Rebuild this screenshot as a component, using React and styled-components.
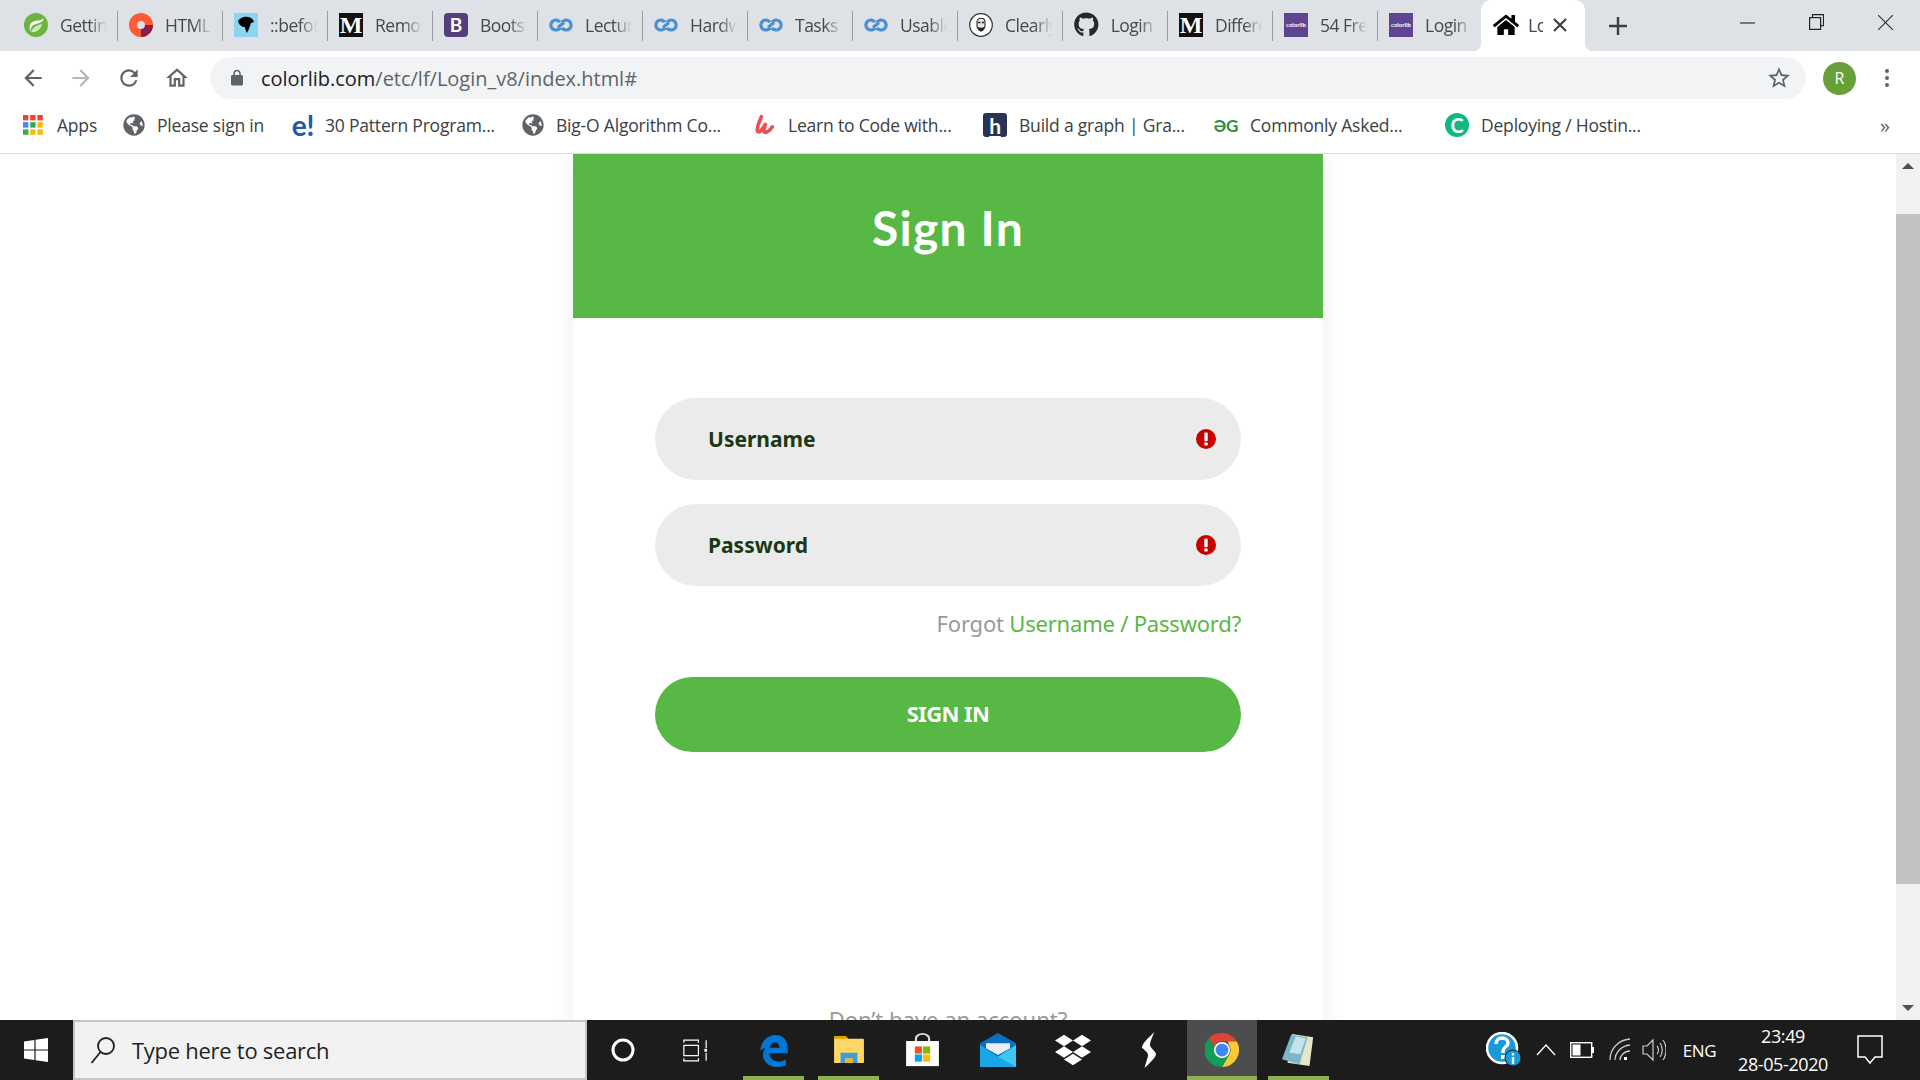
import React from 'react'
import styled, { createGlobalStyle } from 'styled-components'
import { FaHome, FaGithub, FaDropbox, FaGlobeAmericas } from 'react-icons/fa'

const GlobalStyle = createGlobalStyle`
  html, body { margin: 0; padding: 0; background: #fff; }
  * { box-sizing: border-box; }
  body { font-family: "Open Sans", "Liberation Sans", sans-serif; }
`

const Screen = styled.div`
  width: 1920px;
  height: 1080px;
  display: flex;
  flex-direction: column;
  overflow: hidden;
`

/* tab strip */
const TabStrip = styled.div`
  height: 51px;
  flex: none;
  display: flex;
  padding-left: 13px;
  background: #dee1e6;
`
const Tab = styled.div`
  width: 105px;
  height: 51px;
  flex: none;
  display: flex;
  align-items: center;
  padding: 0 11px 2px;
  gap: 12px;
  position: relative;
  &::after {
    content: '';
    position: absolute;
    right: 0;
    top: 11px;
    height: 30px;
    width: 1px;
    background: #9a9da1;
  }
`
const TabLabel = styled.span`
  width: 47px;
  overflow: hidden;
  white-space: nowrap;
  font-size: 17.5px;
  line-height: 24px;
  letter-spacing: -0.5px;
  color: #45484c;
  -webkit-mask-image: linear-gradient(to right, #000 62%, transparent 100%);
  mask-image: linear-gradient(to right, #000 62%, transparent 100%);
`
const ActiveTab = styled.div`
  width: 104px;
  margin-left: -2px;
  height: 51px;
  flex: none;
  display: flex;
  align-items: center;
  padding: 0 0 2px 12px;
  gap: 9px;
  background: #fff;
  border-radius: 10px 10px 0 0;
  position: relative;
  z-index: 1;
  &::before, &::after {
    content: '';
    position: absolute;
    bottom: 0;
    width: 8px;
    height: 8px;
    background: radial-gradient(circle at var(--c) 0, #dee1e6 8px, #fff 8.5px);
  }
  &::before { left: -8px; --c: 0; }
  &::after { right: -8px; --c: 8px; }
`
const ActiveLabel = styled(TabLabel)`
  width: 15px;
  -webkit-mask-image: none;
  mask-image: none;
  margin-right: 1px;
`
const NewTab = styled.div`
  width: 62px;
  display: flex;
  align-items: center;
  justify-content: center;
  margin-left: 2px;
`
const WindowButtons = styled.div`
  margin-left: auto;
  display: flex;
  height: 44px;
  align-items: center;
  padding-right: 27px;
  gap: 54px;
`

/* toolbar */
const Toolbar = styled.div`
  height: 51px;
  flex: none;
  display: flex;
  align-items: flex-start;
  background: #fff;
  padding-top: 6px;
`
const NavButtons = styled.div`
  width: 210px;
  height: 42px;
  flex: none;
  display: flex;
  align-items: center;
  padding-left: 20px;
  gap: 22px;
`
const AddressBar = styled.div`
  width: 1596px;
  height: 42px;
  flex: none;
  display: flex;
  align-items: center;
  background: #f1f3f4;
  border-radius: 21px;
  padding: 0 14px 0 18px;
`
const Url = styled.div`
  margin-left: 15px;
  flex: 1;
  font-size: 20px;
  letter-spacing: -0.02px;
  color: #5f6368;
  b { font-weight: 400; color: #202124; }
`
const ProfileArea = styled.div`
  flex: 1;
  height: 42px;
  display: flex;
  align-items: center;
  padding-left: 17px;
  gap: 29px;
`
const Avatar = styled.div`
  width: 33px;
  height: 33px;
  border-radius: 50%;
  background: #689f38;
  color: #fff;
  font-size: 16px;
  display: flex;
  align-items: center;
  justify-content: center;
`
const Kebab = styled.div`
  display: flex;
  flex-direction: column;
  gap: 3px;
  i {
    width: 4px;
    height: 4px;
    border-radius: 50%;
    background: #5f6368;
  }
`

/* bookmarks */
const BookmarkBar = styled.div`
  height: 52px;
  flex: none;
  display: flex;
  align-items: center;
  padding: 0 30px 5px 23px;
  background: #fff;
  border-bottom: 1px solid #dadce0;
`
const Bookmark = styled.div`
  width: ${p => p.$w}px;
  flex: none;
  display: flex;
  align-items: center;
  gap: ${p => p.$gap || 12}px;
  font-size: 17.5px;
  letter-spacing: -0.2px;
  color: #3c4043;
  white-space: nowrap;
`
const Chevrons = styled.div`
  margin-left: auto;
  font-size: 20px;
  color: #5f6368;
`

/* page */
const Viewport = styled.div`
  flex: 1;
  min-height: 0;
  display: flex;
  overflow: hidden;
  background: #fff;
`
const Main = styled.div`
  flex: 1;
  display: flex;
  justify-content: center;
  overflow: hidden;
  padding: 0 30px;
`
const Card = styled.div`
  width: 750px;
  height: 1000px;
  flex: none;
  background: #fff;
  box-shadow: 0 3px 24px rgba(0, 0, 0, 0.07);
`
const CardHeader = styled.div`
  height: 164px;
  background: #57b846;
  color: #fff;
  display: flex;
  justify-content: center;
  padding-top: 47px;
  font-family: Lato, sans-serif;
  font-weight: 700;
  font-size: 48px;
  letter-spacing: 1.2px;
  line-height: 54px;
`
const Form = styled.div`
  display: flex;
  flex-direction: column;
  padding: 80px 82px 0;
`
const Field = styled.div`
  height: 82px;
  margin-bottom: 24px;
  border-radius: 41px;
  background: #ebebeb;
  display: flex;
  align-items: center;
  justify-content: space-between;
  padding: 0 25px 0 53px;
  font-family: "Noto Sans", sans-serif;
  font-weight: 700;
  font-size: 21px;
  color: #1b3815;
`
const Forgot = styled.div`
  text-align: right;
  margin-top: -2px;
  height: 30px;
  line-height: 30px;
  font-family: "Noto Sans", sans-serif;
  font-size: 22px;
  letter-spacing: -0.2px;
  color: #999;
  a { color: #57b846; }
`
const SubmitButton = styled.div`
  height: 75px;
  margin-top: 39px;
  padding-bottom: 3px;
  border-radius: 38px;
  background: #57b846;
  color: #fff;
  display: flex;
  align-items: center;
  justify-content: center;
  font-family: "Noto Sans", sans-serif;
  font-weight: 700;
  font-size: 22px;
  letter-spacing: -0.6px;
`
const SignupHint = styled.div`
  margin-top: 252px;
  text-align: center;
  font-family: "Noto Sans", sans-serif;
  font-size: 22px;
  color: #999;
`

/* scrollbar */
const ScrollBar = styled.div`
  width: 24px;
  flex: none;
  display: flex;
  flex-direction: column;
  background: #f1f1f1;
`
const ScrollArrow = styled.div`
  height: 24px;
  flex: none;
  display: flex;
  align-items: center;
  justify-content: center;
  margin-top: ${p => (p.$down ? 'auto' : '0')};
  &::before {
    content: '';
    border-left: 6px solid transparent;
    border-right: 6px solid transparent;
    ${p => (p.$down ? 'border-top: 6px solid #505050;' : 'border-bottom: 6px solid #505050;')}
  }
`
const ScrollThumb = styled.div`
  height: 670px;
  margin-top: 36px;
  background: #c1c1c1;
`

/* taskbar */
const Taskbar = styled.div`
  height: 60px;
  flex: none;
  display: flex;
  background: #1c1c1c;
  color: #fff;
`
const StartSlot = styled.div`
  width: 73px;
  display: flex;
  align-items: center;
  justify-content: center;
  padding-right: 2px;
`
const SearchBox = styled.div`
  width: 514px;
  height: 60px;
  display: flex;
  align-items: center;
  padding-left: 15px;
  gap: 16px;
  background: #f2f2f2;
  border: 2px solid #c6c6c6;
  font-size: 22px;
  letter-spacing: -0.27px;
  color: #1f1f1f;
`
const TaskSlot = styled.div`
  width: ${p => p.$w}px;
  margin-left: ${p => p.$ml || 0}px;
  flex: none;
  display: flex;
  align-items: center;
  justify-content: center;
  background: ${p => (p.$active ? '#4d4d4d' : 'transparent')};
  border-bottom: 4px solid ${p => (p.$open ? '#8fb04f' : 'transparent')};
  padding-top: 4px;
`
const Tray = styled.div`
  margin-left: auto;
  display: flex;
  align-items: center;
  height: 60px;
  padding-right: 18px;
`
const TraySlot = styled.div`
  width: ${p => p.$w}px;
  flex: none;
  display: flex;
  align-items: center;
  justify-content: center;
  font-size: 17px;
  letter-spacing: -0.3px;
`
const Clock = styled.div`
  width: 110px;
  flex: none;
  display: flex;
  flex-direction: column;
  align-items: center;
  gap: 6px;
  font-size: 18px;
  line-height: 22px;
  letter-spacing: -0.4px;
`

/* favicons */
const FavBox = styled.div`
  width: 24px;
  height: 24px;
  flex: none;
  display: flex;
  align-items: center;
  justify-content: center;
  background: ${p => p.$bg};
  color: ${p => p.$fg || '#fff'};
  border-radius: ${p => p.$r || 0}px;
  font-family: ${p => p.$font || '"Liberation Serif", serif'};
  font-weight: 700;
  font-size: ${p => p.$size || 22}px;
  line-height: 1;
  overflow: hidden;
`

const SpringIcon = () => (
  <svg width="24" height="24" viewBox="0 0 24 24">
    <circle cx="12" cy="12" r="12" fill="#6db33f" />
    <path d="M20 5c-1 4-4 5-8 6-4 1-6 4-5 8-3-5-1-10 4-11 3-.6 7-.6 9-3z" fill="#fff" />
    <path d="M7 19c2-5 6-7 11-8-1 5-5 9-11 8z" fill="#cfe8b8" />
  </svg>
)
const RingIcon = () => (
  <svg width="24" height="24" viewBox="0 0 24 24">
    <circle cx="12" cy="12" r="8" fill="none" stroke="#ff5a36" strokeWidth="8" />
    <path d="M20 12A8 8 0 0 1 12 20" fill="none" stroke="#8d1c4a" strokeWidth="8" />
  </svg>
)
const DogIcon = () => (
  <svg width="24" height="24" viewBox="0 0 24 24">
    <rect width="24" height="24" fill="#8dd3f2" />
    <path d="M4 8c2-3 6-5 10-4 3 .6 5 2 6 5l-3 1-1 3c-1 3-2 5-3 7-1-2-2-4-2-6-3 0-6-2-7-6z" fill="#000" />
  </svg>
)
const LoopIcon = () => (
  <svg width="24" height="24" viewBox="0 0 24 24">
    <path
      d="M11 9.200A5 5 0 1 0 11 14.800M13 9.200A5 5 0 1 1 13 14.800M9 14.500 15 9.500"
      fill="none"
      stroke="#4a90d2"
      strokeWidth="3.200"
    />
  </svg>
)
const PortraitIcon = () => (
  <svg width="24" height="24" viewBox="0 0 24 24">
    <circle cx="12" cy="12" r="11.300" fill="#fff" stroke="#333" strokeWidth="1.200" />
    <path d="M8 9c0-5 8-5 8 0v4c0 4-8 4-8 0z" fill="#e6e6e6" stroke="#222" strokeWidth="1.100" />
    <path d="M9 9.500h2.400M12.800 9.500H15" stroke="#222" strokeWidth="1.500" />
    <path d="M8.500 14c2 1 5 1 7 0-.4 6-6.600 6-7 0z" fill="#222" />
  </svg>
)
const AppsGrid = () => (
  <svg width="20" height="20" viewBox="0 0 20 20">
    {['#ea4335', '#ea4335', '#ea4335', '#4285f4', '#34a853', '#fbbc05', '#34a853', '#fbbc05', '#fbbc05'].map((c, i) => (
      <rect key={i} x={(i % 3) * 7.2} y={Math.floor(i / 3) * 7.2} width="5.400" height="5.400" fill={c} />
    ))}
  </svg>
)
const UdemyIcon = () => (
  <svg width="22" height="24" viewBox="0 0 24 24" fill="none" stroke="#ec5252" strokeWidth="4" strokeLinecap="round">
    <path d="M8 3C6 9 2 15 4 19c2 2 6-3 9-9-2 5-3 10-1 10 3 0 6-3 8-6" />
  </svg>
)
const MediumFav = () => <FavBox $bg="#111" $size={24}>M</FavBox>
const ColorlibFav = () => <FavBox $bg="#5f4490" $size={6} $font="Lato, sans-serif">colorlib</FavBox>

const HomeGlobe = () => <FaGlobeAmericas size={22} color="#5f6368" />

/* taskbar icons */
const WindowsLogo = () => (
  <svg width="24" height="24" viewBox="0 0 24 24" fill="#fff">
    <path d="M0 3.600 10.400 2v9.400H0zM11.600 1.800 24 0v11.400H11.600zM0 12.600h10.400V22L0 20.400zM11.600 12.600H24V24l-12.400-1.800z" />
  </svg>
)
const MagnifierIcon = () => (
  <svg width="26" height="28" viewBox="0 0 26 28" fill="none" stroke="#1f1f1f" strokeWidth="1.800">
    <circle cx="16" cy="10" r="8" />
    <path d="M10.500 16 1.500 27" />
  </svg>
)
const TaskViewIcon = () => (
  <svg width="24" height="23" viewBox="0 0 28 26" fill="none" stroke="#fff" strokeWidth="1.400">
    <path d="M1 4V1h17v3M1 22v3h17v-3" />
    <rect x="1" y="7" width="17" height="12" />
    <path d="M27 1v9M27 16v9" />
    <rect x="25" y="11" width="3.500" height="3.500" fill="#fff" stroke="none" />
  </svg>
)
const EdgeIcon = () => (
  <svg width="30" height="33" viewBox="0 0 32 36">
    <path
      d="M1 18C2 7 10 1 18 1c8 0 13 6 13 15v5H11c0 6 5 9 10 9 3 0 6-1 8-2v6c-3 1-6 2-10 2-9 0-15-6-15-13 0-3 1-6 3-8-3 1-5 2-6 3zM11 15h11c0-3-2-6-5-6s-5 3-6 6z"
      fill="#0078d7"
    />
  </svg>
)
const FolderIcon = () => (
  <svg width="32" height="28" viewBox="0 0 34 30">
    <path d="M1 0h13l3 4H1z" fill="#e0a100" />
    <rect x="1" y="3" width="32" height="26" rx="1" fill="#ffd766" />
    <path d="M8 29V18h18v11h-5v-5h-8v5z" fill="#3f9bdc" />
    <rect x="13" y="24" width="8" height="5" fill="#f0b429" />
  </svg>
)
const StoreIcon = () => (
  <svg width="35" height="34" viewBox="0 0 32 38" preserveAspectRatio="none">
    <path d="M10 10V6a6 5 0 0 1 12 0v4" fill="none" stroke="#ddd" strokeWidth="2" />
    <rect x="1" y="9" width="30" height="28" fill="#fff" />
    <rect x="9" y="15" width="6.500" height="8" fill="#f25022" />
    <rect x="16.500" y="15" width="6.500" height="8" fill="#7fba00" />
    <rect x="9" y="24" width="6.500" height="8" fill="#00a4ef" />
    <rect x="16.500" y="24" width="6.500" height="8" fill="#ffb900" />
  </svg>
)
const MailIcon = () => (
  <svg width="36" height="34" viewBox="0 0 36 40" preserveAspectRatio="none">
    <path d="M0 12 18 0l18 12v28H0z" fill="#0a6fc2" />
    <path d="M6 12h24v6L18 26 6 18z" fill="#e8eef2" />
    <path d="M0 14l18 14 18-14v26H0z" fill="#1aa5e6" />
    <path d="M36 14v26L18 28z" fill="#3cc8f4" />
  </svg>
)
const SlashIcon = () => (
  <svg width="16" height="36" viewBox="0 0 18 46" preserveAspectRatio="none">
    <path d="M15 0C10 6 2 13 1 20c4 4 7 6 7 10-1 5-3 11-4 16 4-5 12-12 13-18-2-5-6-7-7-11 0-5 3-11 5-17z" fill="#fff" />
  </svg>
)
const ChromeIcon = () => (
  <svg width="34" height="34" viewBox="0 0 36 36">
    <path d="M18 0a18 18 0 0 1 15.600 9H18a9 9 0 0 0-8.400 5.600L4.200 5.600A18 18 0 0 1 18 0z" fill="#db4437" />
    <path d="M33.600 9A18 18 0 0 1 18 36l7.800-13.500A9 9 0 0 0 25.800 13.500L24 9z" fill="#fcc934" />
    <path d="M18 36A18 18 0 0 1 4.200 5.600l7.800 13.500a7 7 0 0 0 10 3.400L25.800 22.500z" fill="#0f9d58" />
    <circle cx="18" cy="18" r="8.500" fill="#fff" />
    <circle cx="18" cy="18" r="6.800" fill="#4285f4" />
  </svg>
)
const NotepadIcon = () => (
  <svg width="33" height="32" viewBox="0 0 36 38" preserveAspectRatio="none">
    <path d="M11 0 34 4 30 38 6 34z" fill="#e8e6c8" />
    <path d="M10 1 28 4 19 36 0 30z" fill="#79b7c9" />
    <path d="M15 3 26 5 20 24 8 22z" fill="#c6e3ea" />
  </svg>
)
const HelpIcon = () => (
  <svg width="36" height="36" viewBox="0 0 36 36">
    <circle cx="16" cy="16" r="15" fill="#1a9ad6" stroke="#fff" strokeWidth="2.500" />
    <path d="M10 12c0-4 3-6 6-6s6 2 6 5c0 4-5 4-5 8v2" fill="none" stroke="#fff" strokeWidth="3.500" />
    <rect x="15" y="23" width="4" height="4" fill="#fff" />
    <circle cx="27" cy="26" r="8" fill="#1a9ad6" stroke="#1c1c1c" />
    <rect x="25.800" y="25" width="2.400" height="7" fill="#fff" />
    <rect x="25.800" y="21" width="2.400" height="2.400" fill="#fff" />
  </svg>
)
const AlertIcon = () => (
  <svg width="20" height="20" viewBox="0 0 20 20">
    <circle cx="10" cy="10" r="10" fill="#c80000" />
    <rect x="8.300" y="3.600" width="3.400" height="8.600" rx="1" fill="#fff" />
    <rect x="8.300" y="13.400" width="3.400" height="3" rx="0.600" fill="#fff" />
  </svg>
)

const tabs = [
  { icon: <SpringIcon />, label: 'Getting' },
  { icon: <RingIcon />, label: 'HTML' },
  { icon: <DogIcon />, label: '::before' },
  { icon: <MediumFav />, label: 'Remove' },
  { icon: <FavBox $bg="#563d7c" $r={4} $font="Lato, sans-serif" $size={19}>B</FavBox>, label: 'Bootstrap' },
  { icon: <LoopIcon />, label: 'Lecture' },
  { icon: <LoopIcon />, label: 'Hardware' },
  { icon: <LoopIcon />, label: 'Tasks' },
  { icon: <LoopIcon />, label: 'Usable' },
  { icon: <PortraitIcon />, label: 'Clearly' },
  { icon: <FaGithub size={25} color="#24292e" />, label: 'Login' },
  { icon: <MediumFav />, label: 'Difference' },
  { icon: <ColorlibFav />, label: '54 Free' },
  { icon: <ColorlibFav />, label: 'Login' },
]

const bookmarks = [
  { w: 100, gap: 14, icon: <AppsGrid />, label: 'Apps' },
  { w: 168, icon: <HomeGlobe />, label: 'Please sign in' },
  { w: 231, gap: 10, icon: <FavBox $bg="transparent" $fg="#1a5aa8" $size={28} $font="Lato, sans-serif">e!</FavBox>, label: '30 Pattern Program...' },
  { w: 232, icon: <HomeGlobe />, label: 'Big-O Algorithm Co...' },
  { w: 229, gap: 12, icon: <UdemyIcon />, label: 'Learn to Code with...' },
  { w: 231, icon: <FavBox $bg="#2b3354" $r={3} $font="Lato, sans-serif" $size={21}><u>h</u></FavBox>, label: 'Build a graph | Gra...' },
  { w: 231, icon: <FavBox $bg="transparent" $fg="#2f8d46" $size={17} $font="Lato, sans-serif">ƏG</FavBox>, label: 'Commonly Asked...' },
  { w: 230, icon: <FavBox $bg="#10b981" $r={12} $font="Lato, sans-serif" $size={20}>C</FavBox>, label: 'Deploying / Hostin...' },
]

export default function App() {
  return (
    <Screen>
      <GlobalStyle />
      <TabStrip>
        {tabs.map((t, i) => (
          <Tab key={i}>
            {t.icon}
            <TabLabel>{t.label}</TabLabel>
          </Tab>
        ))}
        <ActiveTab>
          <FaHome size={26} color="#000" />
          <ActiveLabel>Lo</ActiveLabel>
          <svg width="14" height="14" viewBox="0 0 14 14" stroke="#3c4043" strokeWidth="2.200">
            <path d="M1 1 13 13M13 1 1 13" />
          </svg>
        </ActiveTab>
        <NewTab>
          <svg width="18" height="18" viewBox="0 0 18 18" stroke="#3c4043" strokeWidth="2.400">
            <path d="M9 0v18M0 9h18" />
          </svg>
        </NewTab>
        <WindowButtons>
          <svg width="15" height="15" viewBox="0 0 15 15" stroke="#333" strokeWidth="1.200">
            <path d="M0 8h15" />
          </svg>
          <svg width="15" height="16" viewBox="0 0 15 16" fill="none" stroke="#222" strokeWidth="1.200">
            <path d="M3.500 3V.6h11v11H12" />
            <rect x="0.600" y="3.600" width="11" height="11.800" />
          </svg>
          <svg width="15" height="15" viewBox="0 0 15 15" stroke="#333" strokeWidth="1.200">
            <path d="M0 0 15 15M15 0 0 15" />
          </svg>
        </WindowButtons>
      </TabStrip>

      <Toolbar>
        <NavButtons>
          <svg width="26" height="26" viewBox="0 0 24 24" fill="#5f6368">
            <path d="M20 11H7.830l5.590-5.590L12 4l-8 8 8 8 1.410-1.410L7.830 13H20v-2z" />
          </svg>
          <svg width="26" height="26" viewBox="0 0 24 24" fill="#b4b6b9">
            <path d="M12 4l-1.410 1.410L16.170 11H4v2h12.170l-5.580 5.590L12 20l8-8z" />
          </svg>
          <svg width="26" height="26" viewBox="0 0 24 24" fill="#5f6368">
            <path d="M17.650 6.350A7.958 7.958 0 0 0 12 4c-4.420 0-7.990 3.580-7.990 8s3.570 8 7.990 8c3.730 0 6.840-2.550 7.730-6h-2.080A5.990 5.990 0 0 1 12 18c-3.310 0-6-2.690-6-6s2.690-6 6-6c1.660 0 3.140.690 4.220 1.780L13 11h7V4l-2.350 2.350z" />
          </svg>
          <svg width="26" height="26" viewBox="0 0 24 24" fill="#5f6368">
            <path d="M12 5.690l5 4.500V18h-2v-6H9v6H7v-7.810l5-4.500M12 3L2 12h3v8h6v-6h2v6h6v-8h3L12 3z" />
          </svg>
        </NavButtons>
        <AddressBar>
          <svg width="18" height="18" viewBox="0 0 24 24" fill="#5f6368">
            <path d="M18 8h-1V6c0-2.760-2.240-5-5-5S7 3.240 7 6v2H6c-1.100 0-2 .9-2 2v10c0 1.100.9 2 2 2h12c1.100 0 2-.9 2-2V10c0-1.100-.9-2-2-2zM9 6c0-1.660 1.340-3 3-3s3 1.340 3 3v2H9V6z" />
          </svg>
          <Url><b>colorlib.com</b>/etc/lf/Login_v8/index.html#</Url>
          <svg width="26" height="26" viewBox="0 0 24 24" fill="#5f6368">
            <path d="M22 9.240l-7.190-.62L12 2 9.190 8.630 2 9.240l5.460 4.730L5.820 21 12 17.270 18.180 21l-1.630-7.030L22 9.240zM12 15.400l-3.760 2.270 1-4.280-3.320-2.880 4.380-.38L12 6.100l1.710 4.040 4.380.38-3.320 2.880 1 4.280L12 15.400z" />
          </svg>
        </AddressBar>
        <ProfileArea>
          <Avatar>R</Avatar>
          <Kebab><i /><i /><i /></Kebab>
        </ProfileArea>
      </Toolbar>

      <BookmarkBar>
        {bookmarks.map((b, i) => (
          <Bookmark key={i} $w={b.w} $gap={b.gap}>
            {b.icon}
            <span>{b.label}</span>
          </Bookmark>
        ))}
        <Chevrons>»</Chevrons>
      </BookmarkBar>

      <Viewport>
        <Main>
          <Card>
            <CardHeader>Sign In</CardHeader>
            <Form>
              <Field>Username<AlertIcon /></Field>
              <Field>Password<AlertIcon /></Field>
              <Forgot>Forgot <a>Username / Password?</a></Forgot>
              <SubmitButton>SIGN IN</SubmitButton>
              <SignupHint>Don’t have an account?</SignupHint>
            </Form>
          </Card>
        </Main>
        <ScrollBar>
          <ScrollArrow />
          <ScrollThumb />
          <ScrollArrow $down />
        </ScrollBar>
      </Viewport>

      <Taskbar>
        <StartSlot><WindowsLogo /></StartSlot>
        <SearchBox>
          <MagnifierIcon />
          Type here to search
        </SearchBox>
        <TaskSlot $w={72}>
          <svg width="24" height="24" viewBox="0 0 24 24" fill="none" stroke="#fff" strokeWidth="3">
            <circle cx="12" cy="12" r="10" />
          </svg>
        </TaskSlot>
        <TaskSlot $w={72}><TaskViewIcon /></TaskSlot>
        <TaskSlot $w={61} $ml={12} $open><EdgeIcon /></TaskSlot>
        <TaskSlot $w={61} $ml={14} $open><FolderIcon /></TaskSlot>
        <TaskSlot $w={75} $ml={6}><StoreIcon /></TaskSlot>
        <TaskSlot $w={75}><MailIcon /></TaskSlot>
        <TaskSlot $w={75}><FaDropbox size={36} color="#fff" /></TaskSlot>
        <TaskSlot $w={77}><SlashIcon /></TaskSlot>
        <TaskSlot $w={70} $active $open><ChromeIcon /></TaskSlot>
        <TaskSlot $w={61} $ml={11} $open><NotepadIcon /></TaskSlot>
        <Tray>
          <TraySlot $w={54}><HelpIcon /></TraySlot>
          <TraySlot $w={30}>
            <svg width="20" height="12" viewBox="0 0 20 12" fill="none" stroke="#fff" strokeWidth="1.300">
              <path d="M1 11 10 1l9 10" />
            </svg>
          </TraySlot>
          <TraySlot $w={42}>
            <svg width="24" height="16" viewBox="0 0 24 16">
              <rect x="0.700" y="0.700" width="21" height="14.600" fill="none" stroke="#fff" strokeWidth="1.400" />
              <rect x="2.500" y="2.500" width="8" height="11" fill="#fff" />
              <rect x="22" y="5" width="2" height="6" fill="#fff" />
            </svg>
          </TraySlot>
          <TraySlot $w={34}>
            <svg width="22" height="24" viewBox="0 0 22 24" fill="none" stroke="#ccc" strokeWidth="1.300">
              <path d="M1 22C1 11 9 2 21 1M6 22c0-7 6-14 15-15M11 22c0-4 4-9 10-9" />
              <rect x="15" y="19" width="3" height="3" fill="#fff" stroke="none" />
            </svg>
          </TraySlot>
          <TraySlot $w={34}>
            <svg width="24" height="24" viewBox="0 0 24 24" fill="none" stroke="#ccc" strokeWidth="1.200">
              <path d="M1 8h4l6-6v20l-6-6H1zM15 8c2 2 2 6 0 8M18 5c3 4 3 10 0 14M21 2c4 5 4 15 0 20" />
            </svg>
          </TraySlot>
          <TraySlot $w={57}>ENG</TraySlot>
          <Clock>
            <span>23:49</span>
            <span>28-05-2020</span>
          </Clock>
          <TraySlot $w={64}>
            <svg width="26" height="30" viewBox="0 0 26 30" fill="none" stroke="#fff" strokeWidth="1.500">
              <path d="M1 1h24v21h-7l-5 6-5-6H1z" />
            </svg>
          </TraySlot>
        </Tray>
      </Taskbar>
    </Screen>
  )
}
